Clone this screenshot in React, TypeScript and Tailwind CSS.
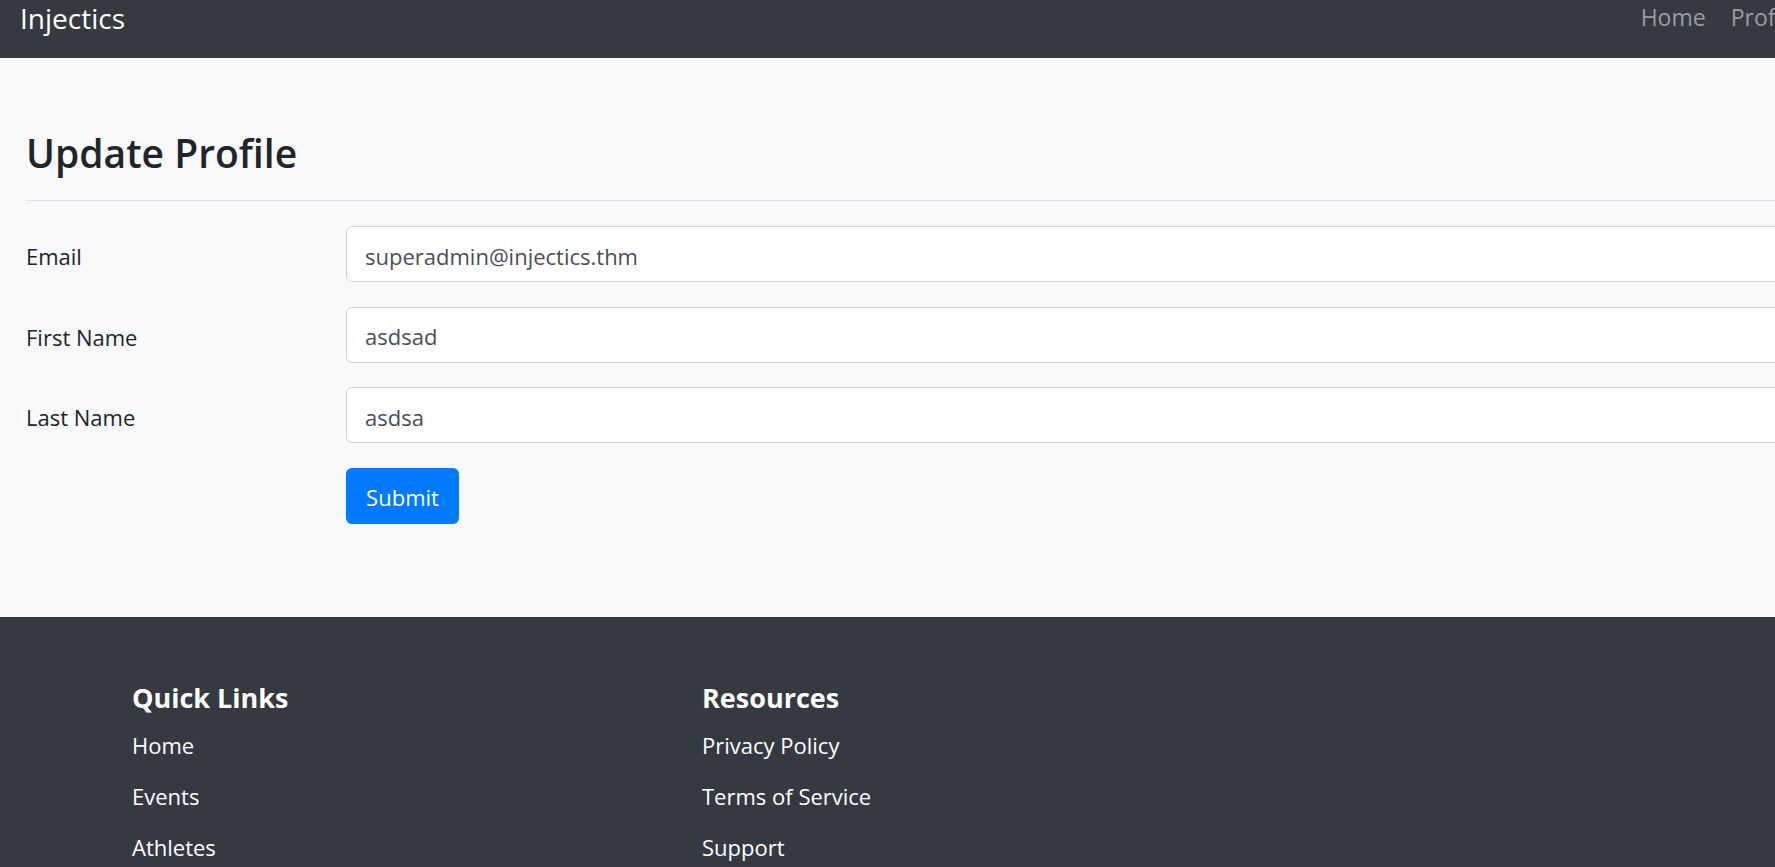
import React from "react";

const fields = [
    { label: "Email", value: "superadmin@injectics.thm" },
    { label: "First Name", value: "asdsad" },
    { label: "Last Name", value: "asdsa" },
];

const footerCols = [
    { title: "Quick Links", links: ["Home", "Events", "Athletes"] },
    { title: "Resources", links: ["Privacy Policy", "Terms of Service", "Support"] },
];

export default function App() {
    return (
        <div className="w-full overflow-hidden font-['Segoe_UI','Open_Sans',sans-serif] text-[#212529]">
            <div className="w-[1840px]">
                <nav className="flex h-[58px] items-start justify-between bg-[#343a40] pl-[20px] pr-[40px]">
                    <span className="pt-[4px] text-[28px] leading-[28px] text-white">Injectics</span>
                    <div className="flex gap-[25px] pt-[6px] text-[23px] leading-[23px] text-[#9a9da0]">
                        <span>Home</span>
                        <span>Profile</span>
                    </div>
                </nav>

                <main className="bg-[#f8f9fa] pl-[26px] pt-[71px] pb-[93px]">
                    <h2 className="text-[39px] font-semibold leading-[48px]">Update Profile</h2>
                    <hr className="mt-[23px] mb-[25px] border-0 border-t border-[#dee2e6]" />
                    <form className="flex flex-col gap-[24.6px]">
                        {fields.map((f) => (
                            <div key={f.label} className="flex h-[56px]">
                                <label className="w-[320px] shrink-0 pt-[14px] text-[22px] leading-[33px]">
                                    {f.label}
                                </label>
                                <input
                                    defaultValue={f.value}
                                    className="h-[56px] flex-1 rounded-[6px] border border-[#ced4da] bg-white pl-[18px] pt-[3px] text-[22px] text-[#495057] outline-none"
                                />
                            </div>
                        ))}
                        <div className="flex">
                            <div className="w-[320px] shrink-0" />
                            <button
                                type="button"
                                className="h-[56px] w-[113px] rounded-[6px] bg-[#007bff] pt-[3px] text-[22px] text-white"
                            >
                                Submit
                            </button>
                        </div>
                    </form>
                </main>

                <footer className="h-[300px] bg-[#343a40] pl-[132px] pt-[65px] text-white">
                    <div className="grid grid-cols-[570px_570px]">
                        {footerCols.map((col) => (
                            <div key={col.title}>
                                <h5 className="mb-[15px] text-[27px] font-bold leading-[32px]">{col.title}</h5>
                                <ul className="flex flex-col gap-[18px] text-[22px] leading-[33px]">
                                    {col.links.map((l) => (
                                        <li key={l}>{l}</li>
                                    ))}
                                </ul>
                            </div>
                        ))}
                    </div>
                </footer>
            </div>
        </div>
    );
}
